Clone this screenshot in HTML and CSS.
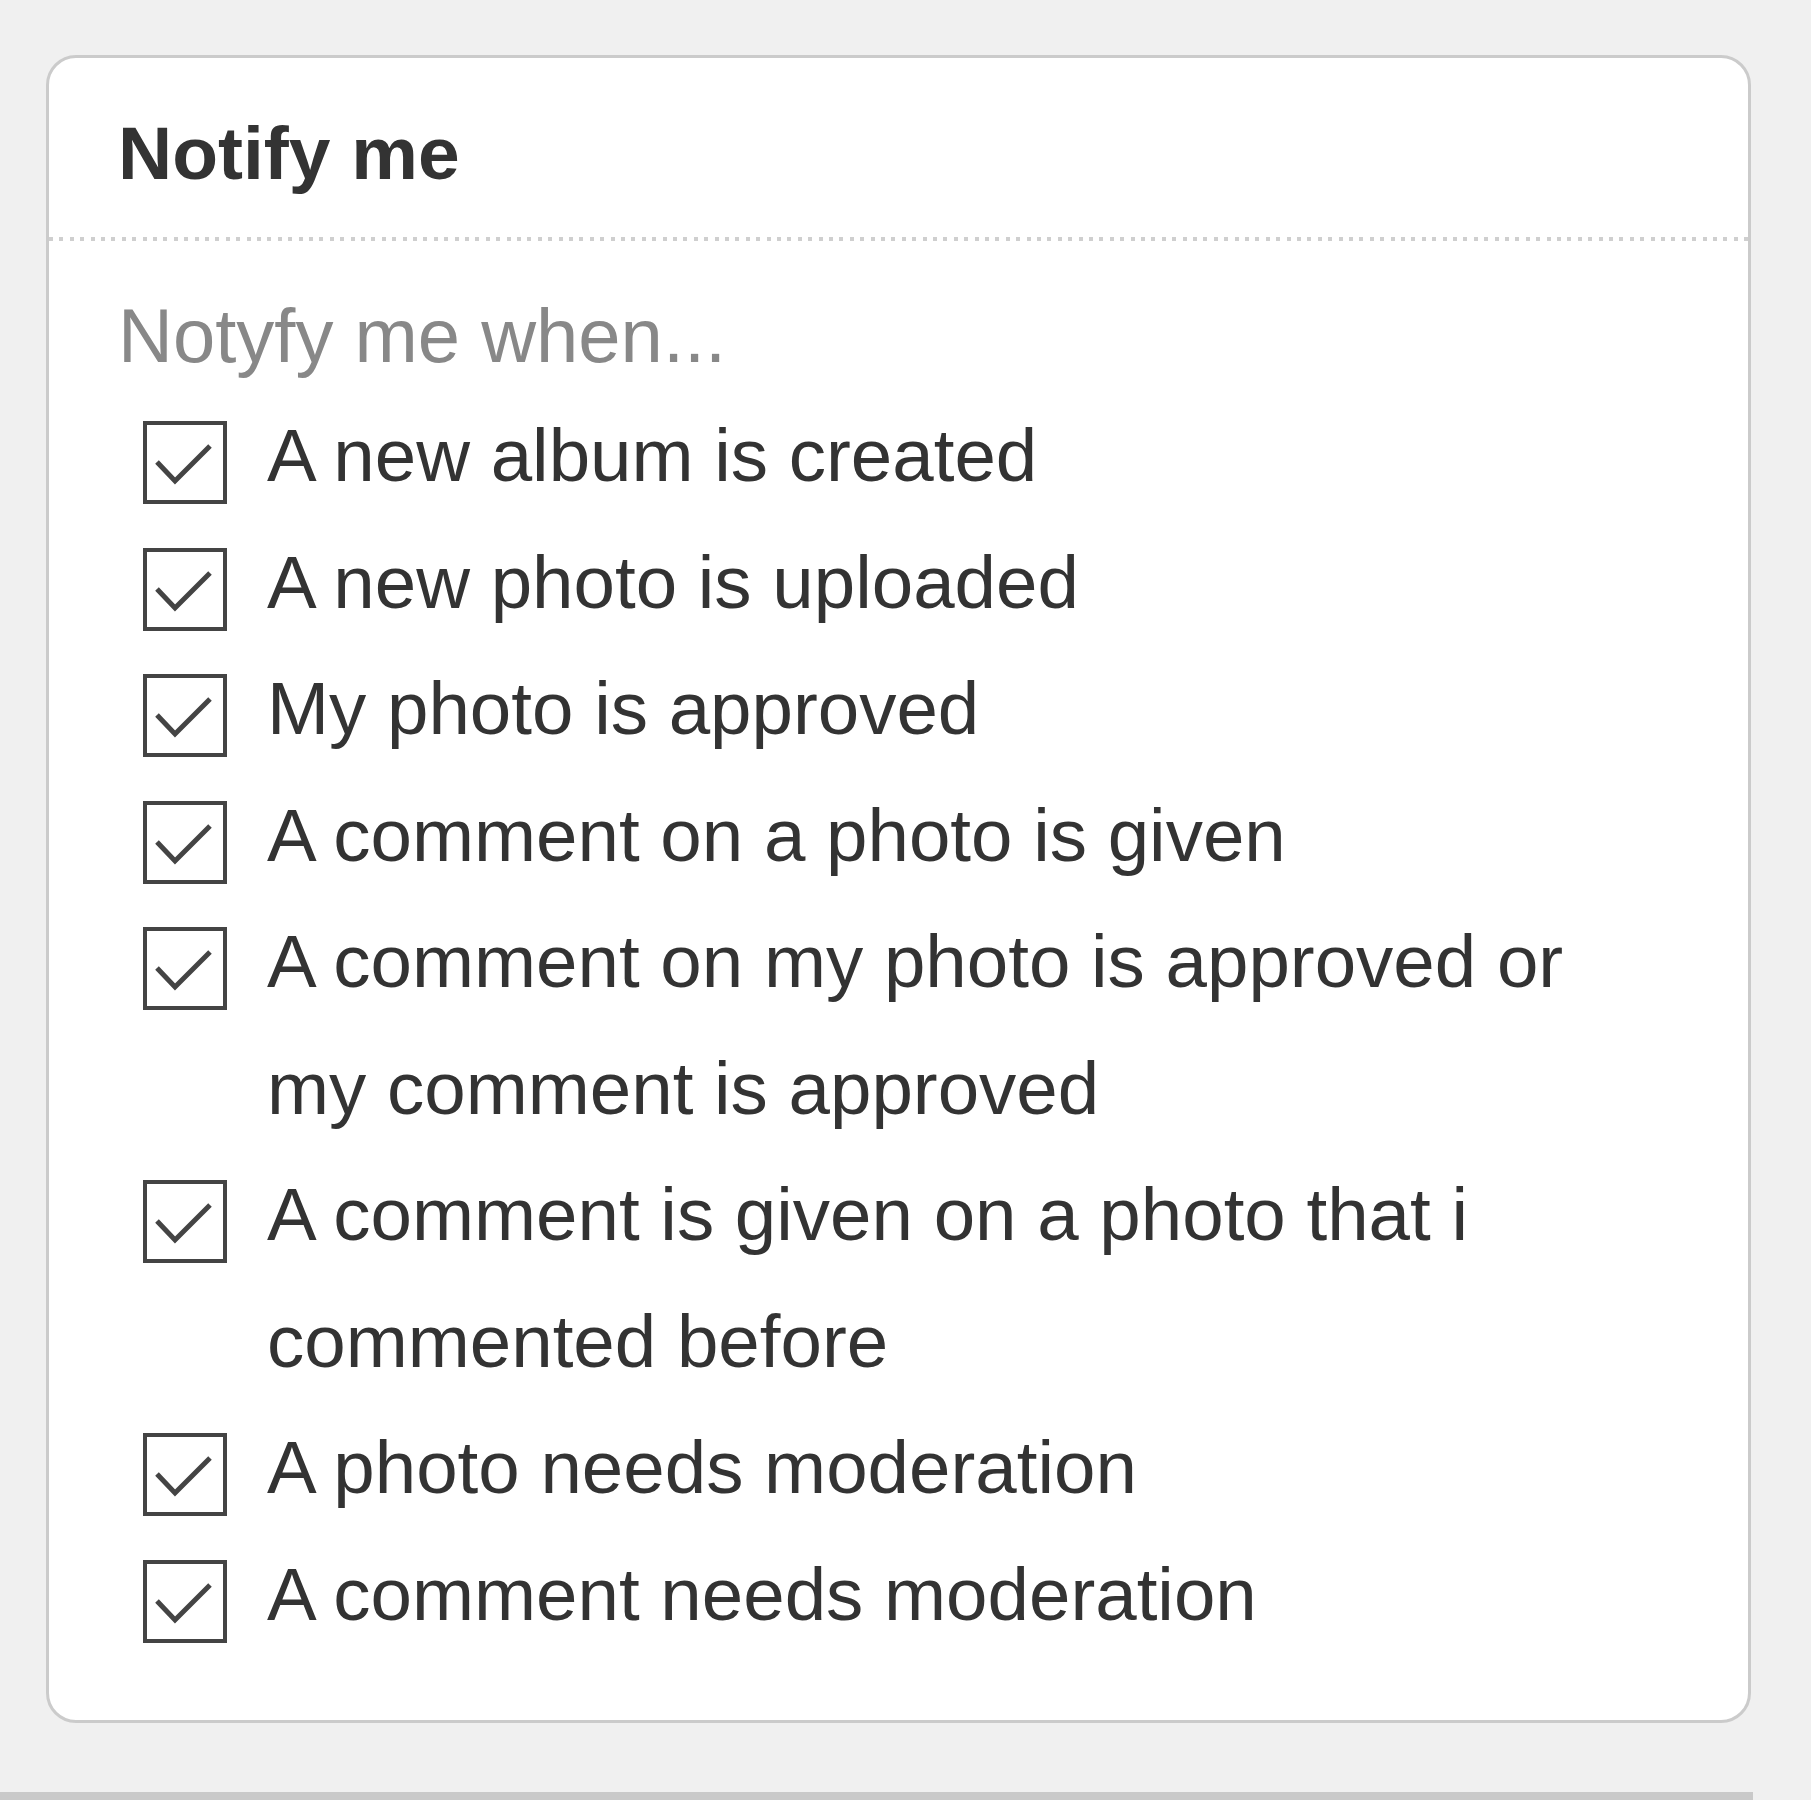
FILE: index.html
```html
<!DOCTYPE html>
<html lang="en">
<head>
  <meta charset="UTF-8">
  <title>Notify me</title>
  <link rel="stylesheet" href="styles.css">
</head>
<body>

<div class="page">
  <div class="panel">
    <div class="panel-head">Notify me</div>
    <div class="panel-body">
      <p class="hint">Notyfy me when...</p>
      <ul class="options">
        <li class="option"><span class="check"></span><span>A new album is created</span></li>
        <li class="option"><span class="check"></span><span>A new photo is uploaded</span></li>
        <li class="option"><span class="check"></span><span>My photo is approved</span></li>
        <li class="option"><span class="check"></span><span>A comment on a photo is given</span></li>
        <li class="option"><span class="check"></span><span>A comment on my photo is approved or my comment is approved</span></li>
        <li class="option"><span class="check"></span><span>A comment is given on a photo that i commented before</span></li>
        <li class="option"><span class="check"></span><span>A photo needs moderation</span></li>
        <li class="option"><span class="check"></span><span>A comment needs moderation</span></li>
      </ul>
    </div>
  </div>
  <div class="footer-bar"></div>
</div>

<script>
// Casillas marcadas: se dibujan con SVG
document.querySelectorAll('.check').forEach(function(box) {
  box.innerHTML =
    '<svg width="84" height="83" viewBox="0 0 84 83">' +
    '<rect x="2" y="2" width="80" height="79" fill="#fff" stroke="#444" stroke-width="4"/>' +
    '<polyline points="14,41 32,60 67,25" fill="none" stroke="#444" stroke-width="5"/>' +
    '</svg>';
});
</script>

</body>
</html>
```

FILE: styles.css
```css
body {
  margin: 0;
  background-color: #f0f0f0;
  font-family: "Liberation Sans", Arial, sans-serif;
  color: #333;
}

.page {
  padding-top: 55px;
  padding-left: 46px;
}

/* Tarjeta principal */
.panel {
  box-sizing: border-box;
  width: 1705px;
  height: 1668px;
  background-color: #fff;
  border: 3px solid #cbcbcb;
  border-radius: 30px;
  overflow: hidden;
}

/* Cabecera con línea punteada debajo */
.panel-head {
  padding: 45px 64px 38px 69px;
  font-size: 75px;
  font-weight: bold;
  line-height: 100px;
  color: #333;
  background: repeating-linear-gradient(to right, #cfcfcf 0 4px, transparent 4px 10.4px) left bottom / 100% 4px no-repeat;
}

.panel-body {
  padding: 37px 120px 0 64px;
}

.hint {
  margin: 0 0 0 5px;
  font-size: 76px;
  line-height: 115px;
  color: #888;
}

.options {
  list-style: none;
  margin: 0;
  padding: 0;
}

.option {
  display: grid;
  grid-template-columns: 84px 1fr;
  column-gap: 40px;
  padding-left: 30px;
  font-size: 74.5px;
  line-height: 126.5px;
  color: #333;
}

.check {
  display: block;
  width: 84px;
  height: 83px;
  margin-top: 28px;
}

.check svg {
  display: block;
}

/* Barra gris inferior */
.footer-bar {
  width: 1753px;
  height: 8px;
  margin-top: 69px;
  margin-left: -46px;
  background-color: #c9c9c9;
}
```
